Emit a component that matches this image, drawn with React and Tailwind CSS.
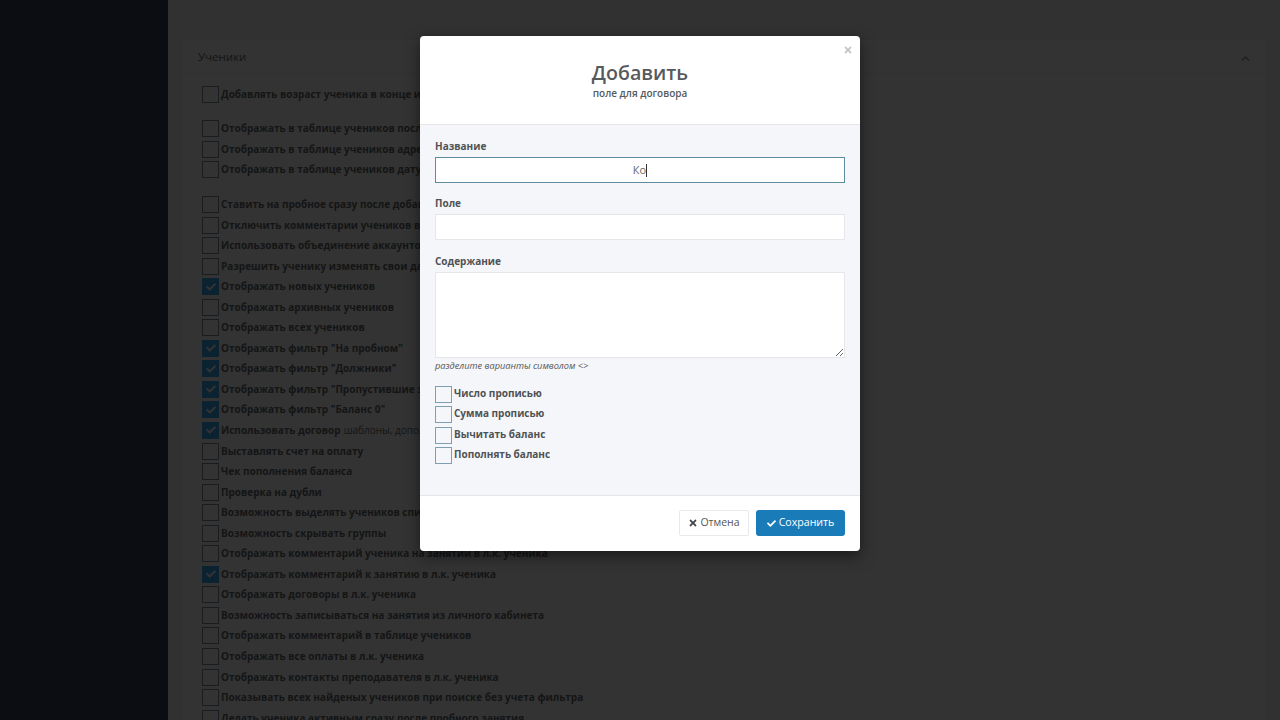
import { FaCheck, FaTimes, FaChevronUp } from 'react-icons/fa';

const GROUPS = [
  [{ label: 'Добавлять возраст ученика в конце имени' }],
  [
    { label: 'Отображать в таблице учеников последнее занятие' },
    { label: 'Отображать в таблице учеников адрес' },
    { label: 'Отображать в таблице учеников дату рождения' },
  ],
  [
    { label: 'Ставить на пробное сразу после добавления' },
    { label: 'Отключить комментарии учеников в л.к.' },
    { label: 'Использовать объединение аккаунтов' },
    { label: 'Разрешить ученику изменять свои данные' },
    { label: 'Отображать новых учеников', checked: true },
    { label: 'Отображать архивных учеников' },
    { label: 'Отображать всех учеников' },
    { label: 'Отображать фильтр "На пробном"', checked: true },
    { label: 'Отображать фильтр "Должники"', checked: true },
    { label: 'Отображать фильтр "Пропустившие занятия"', checked: true },
    { label: 'Отображать фильтр "Баланс 0"', checked: true },
    { label: 'Использовать договор', note: 'шаблоны, дополнительные поля', checked: true },
    { label: 'Выставлять счет на оплату' },
    { label: 'Чек пополнения баланса' },
    { label: 'Проверка на дубли' },
    { label: 'Возможность выделять учеников списком' },
    { label: 'Возможность скрывать группы' },
    { label: 'Отображать комментарий ученика на занятии в л.к. ученика' },
    { label: 'Отображать комментарий к занятию в л.к. ученика', checked: true },
    { label: 'Отображать договоры в л.к. ученика' },
    { label: 'Возможность записываться на занятия из личного кабинета' },
    { label: 'Отображать комментарий в таблице учеников' },
    { label: 'Отображать все оплаты в л.к. ученика' },
    { label: 'Отображать контакты преподавателя в л.к. ученика' },
    { label: 'Показывать всех найденых учеников при поиске без учета фильтра' },
    { label: 'Делать ученика активным сразу после пробного занятия' },
  ],
];

const MODAL_OPTIONS = ['Число прописью', 'Сумма прописью', 'Вычитать баланс', 'Пополнять баланс'];

function CheckRow({ label, note, checked }) {
  return (
    <div className="flex h-[20.55px] items-center gap-[2px] whitespace-nowrap">
      <span
        className={`grid size-[17px] shrink-0 place-items-center border ${
          checked ? 'border-[#3aa8f0] bg-[#3aa8f0] text-white' : 'border-[#7f8f99] bg-white'
        }`}
      >
        {checked ? <FaCheck className="size-[10px]" aria-hidden="true" /> : null}
      </span>
      <span className="text-[10px] font-bold text-[#676a6c]">{label}</span>
      {note ? <span className="ml-[1px] text-[10px] text-[#676a6c]">{note}</span> : null}
    </div>
  );
}

function FieldLabel({ children }) {
  return <label className="mb-[2px] block h-[18px] text-[10px] leading-[19px] font-bold text-[#4f5254]">{children}</label>;
}

export default function App() {
  return (
    <div className="relative flex h-screen overflow-hidden bg-[#f3f3f4] font-['Open_Sans',sans-serif] text-[#676a6c]">
      <aside className="w-[168px] shrink-0 bg-[#3a4260]" />

      <main className="min-w-0 flex-1 px-[15px] pt-[40px]">
        <section className="bg-white">
          <header className="flex h-[34px] items-center justify-between border-b border-[#f0f0f0] px-[15px]">
            <h2 className="mt-[1px] text-[11.5px] font-normal">Ученики</h2>
            <FaChevronUp className="mt-[3px] size-[9px] text-[#9a9a9a]" aria-hidden="true" />
          </header>
          <div className="flex flex-col gap-[14px] px-[19px] pt-[10px]">
            {GROUPS.map((group, index) => (
              <div key={index}>
                {group.map((row) => (
                  <CheckRow key={row.label} {...row} />
                ))}
              </div>
            ))}
          </div>
        </section>
      </main>

      <div className="absolute inset-0 flex justify-center bg-black/80 pt-[36px]">
        <div
          role="dialog"
          className="relative flex h-[515px] w-[440px] flex-col overflow-hidden rounded-[4px] bg-white shadow-[0_5px_15px_rgba(0,0,0,0.5)]"
        >
          <button type="button" className="absolute top-[9px] right-[7px] text-[#c4c4c4]" aria-label="Закрыть">
            <FaTimes className="size-[10px]" aria-hidden="true" />
          </button>

          <div className="flex h-[89px] shrink-0 flex-col items-center border-b border-[#e5e5e5] pt-[24px]">
            <h1 className="text-[19.6px] leading-[26px] font-semibold text-[#565a5c]">Добавить</h1>
            <p className="text-[10px] leading-[15px] font-semibold text-[#565a5c]">поле для договора</p>
          </div>

          <div className="flex-1 bg-[#f4f6fa] px-[15px] pt-[12px]">
            <FieldLabel>Название</FieldLabel>
            <div className="flex h-[26px] items-center justify-center border border-[#5d8c9e] bg-white pt-px text-[11px]">
              <span>Ко</span>
              <span className="h-[13px] w-px bg-[#333]" />
            </div>

            <div className="mt-[11px]">
              <FieldLabel>Поле</FieldLabel>
              <input className="block h-[26px] w-full border border-[#e5e6e7] bg-white" readOnly />
            </div>

            <div className="mt-[12px]">
              <FieldLabel>Содержание</FieldLabel>
              <textarea className="block h-[86px] w-full border border-[#e5e6e7] bg-white" readOnly />
            </div>
            <p className="mt-[1px] text-[9.2px] leading-[14px] text-[#555] italic">разделите варианты символом &lt;&gt;</p>

            <div className="mt-[10px]">
              {MODAL_OPTIONS.map((option) => (
                <div key={option} className="flex h-[20.55px] items-center gap-[2px]">
                  <span className="size-[17px] shrink-0 translate-y-px border border-[#7f9fb0] bg-[#f4f6fa]" />
                  <span className="text-[10px] font-bold text-[#4f5254]">{option}</span>
                </div>
              ))}
            </div>
          </div>

          <div className="flex h-[56px] shrink-0 items-center justify-end gap-[7px] border-t border-[#e5e5e5] px-[15px] pb-px">
            <button type="button" className="flex h-[26px] w-[70px] items-center justify-center gap-[2px] rounded-[2px] border border-[#e7eaec] bg-white text-[10.5px] text-[#555]">
              <FaTimes className="size-[10px] text-[#444]" aria-hidden="true" />
              Отмена
            </button>
            <button type="button" className="flex h-[26px] w-[89px] items-center justify-center gap-[3px] rounded-[3px] bg-[#1a7bb9] text-[10.6px] text-white">
              <FaCheck className="size-[9px]" aria-hidden="true" />
              Сохранить
            </button>
          </div>
        </div>
      </div>
    </div>
  );
}
